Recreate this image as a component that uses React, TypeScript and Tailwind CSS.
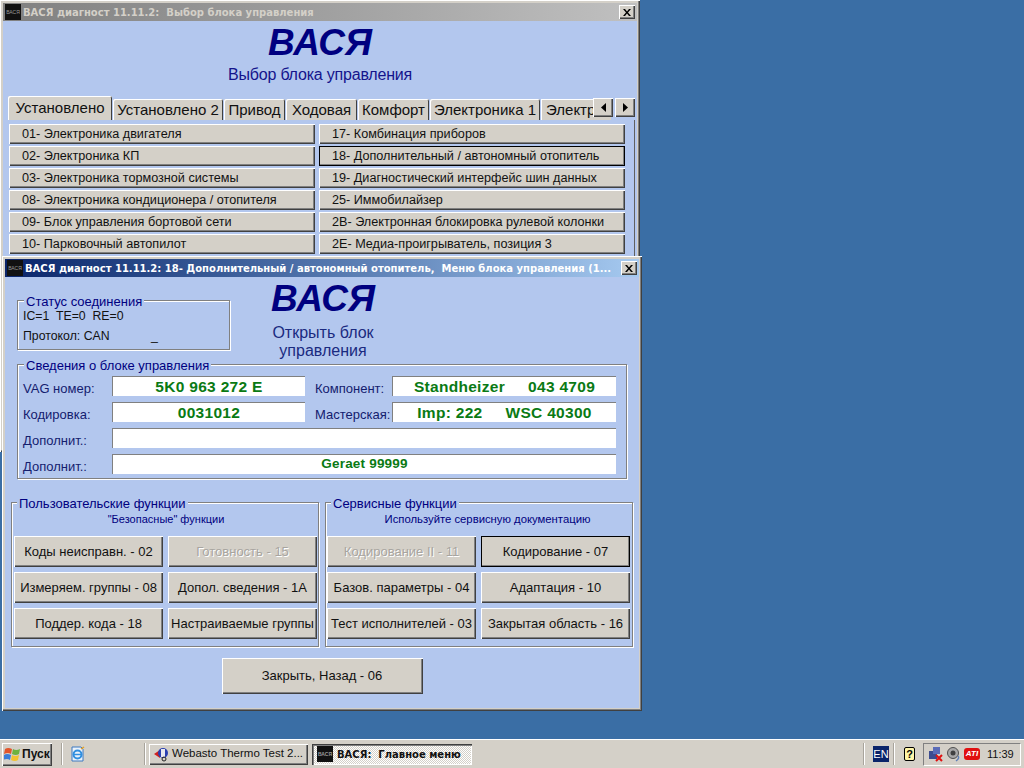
import type { ReactNode } from "react";

const bevel = "bg-[#D4D0C8] shadow-[inset_1px_1px_0_#fff,inset_-1px_-1px_0_#404040,inset_-2px_-2px_0_#808080]";
const etched = "border border-[#808080] shadow-[inset_1px_1px_0_#fff,1px_1px_0_#fff]";

const modulesLeft = [
  "01- Электроника двигателя",
  "02- Электроника КП",
  "03- Электроника тормозной системы",
  "08- Электроника кондиционера / отопителя",
  "09- Блок управления бортовой сети",
  "10- Парковочный автопилот",
];
const modulesRight = [
  "17- Комбинация приборов",
  "18- Дополнительный / автономный отопитель",
  "19- Диагностический интерфейс шин данных",
  "25- Иммобилайзер",
  "2B- Электронная блокировка рулевой колонки",
  "2E- Медиа-проигрыватель, позиция 3",
];

const tabs = [
  { label: "Установлено 2", w: "w-[110px]" },
  { label: "Привод", w: "w-[61px]" },
  { label: "Ходовая", w: "w-[71px]" },
  { label: "Комфорт", w: "w-[71px]" },
  { label: "Электроника 1", w: "w-[110px]" },
];

function AppLogo({ size = "w-[16px] h-[16px]" }: { size?: string }) {
  return (
    <div className={`${size} shrink-0 bg-[#111] flex items-center justify-center overflow-hidden text-[5px] leading-none text-[#999]`}>
      ВАСЯ
    </div>
  );
}

function CloseBox() {
  return (
    <div className={`${bevel} w-[16px] h-[14px] flex items-center justify-center`}>
      <svg width="8" height="7" viewBox="0 0 8 7">
        <path d="M0 0 L2 0 L4 2.5 L6 0 L8 0 L5 3.5 L8 7 L6 7 L4 4.5 L2 7 L0 7 L3 3.5 Z" fill="#000" />
      </svg>
    </div>
  );
}

function TitleBar({ text, active }: { text: string; active?: boolean }) {
  return (
    <div
      className={`h-[18px] shrink-0 flex items-center pl-[2px] pr-[2px] ${
        active ? "bg-gradient-to-r from-[#0A246A] to-[#A6CAF0] text-white" : "bg-gradient-to-r from-[#808080] to-[#C0C0C0] text-[#D4D0C8]"
      }`}
    >
      <AppLogo />
      <span className="ml-[2px] pt-[1px] flex-1 whitespace-pre font-['DejaVu_Sans',sans-serif] text-[10px] font-bold leading-none">{text}</span>
      <CloseBox />
    </div>
  );
}

function ModuleButton({ text, focused }: { text: string; focused?: boolean }) {
  return (
    <div
      className={`${bevel} h-[20px] flex items-center pl-[13px] text-[12.65px] text-[#111] ${focused ? "outline outline-1 -outline-offset-1 outline-black" : ""}`}
    >
      {text}
    </div>
  );
}

function FuncButton({ text, disabled, focused }: { text: string; disabled?: boolean; focused?: boolean }) {
  return (
    <div
      className={`${bevel} h-[31px] flex items-center justify-center text-[13px] whitespace-nowrap ${
        disabled ? "text-[#A8A5A0] [text-shadow:1px_1px_0_#fff]" : "text-[#111]"
      } ${focused ? "outline outline-1 -outline-offset-1 outline-black" : ""}`}
    >
      {text}
    </div>
  );
}

function Group({ legend, legendLeft = "left-[6px]", className, children }: { legend: string; legendLeft?: string; className: string; children: ReactNode }) {
  return (
    <div className={`relative ${etched} ${className}`}>
      <div className={`absolute -top-[6px] ${legendLeft} bg-[#B3C7EE] px-[2px] text-[13px] leading-[14px] text-[#000080]`}>{legend}</div>
      {children}
    </div>
  );
}

function Field({ text, small, className = "" }: { text?: string; small?: boolean; className?: string }) {
  return (
    <div
      className={`h-[20px] bg-white border-t border-l border-[#808080] flex items-center justify-center whitespace-pre font-bold text-[#0A7A14] ${
        small ? "text-[13.5px] tracking-[0.2px]" : "text-[15.5px] tracking-[0.3px]"
      } ${className}`}
    >
      {text}
    </div>
  );
}

function FieldLabel({ text }: { text: string }) {
  return <div className="h-[20px] pt-[4px] text-[13px] leading-[18px] text-[#14206E] whitespace-nowrap">{text}</div>;
}

function SelectWindow() {
  return (
    <div className="absolute left-0 top-0 w-[640px] h-[452px] p-[3px] flex flex-col bg-[#D4D0C8] shadow-[inset_1px_1px_0_#fff,inset_-1px_-1px_0_#404040,inset_-2px_-2px_0_#808080]">
      <TitleBar text="ВАСЯ диагност 11.11.2:  Выбор блока управления" />
      <div className="flex-1 bg-[#B3C7EE] flex flex-col">
        <div className="pt-[2px] text-center text-[37px] leading-[40px] font-bold italic text-[#000080]">ВАСЯ</div>
        <div className="mt-[3px] text-center text-[16px] tracking-[-0.2px] leading-[18px] text-[#14148C]">Выбор блока управления</div>
        <div className="relative mt-[12px] ml-[5px] w-[627px] h-[24px] flex items-end overflow-hidden text-[15px] text-[#111]">
          <div className="w-[104px] h-[24px] shrink-0 bg-[#D4D0C8] rounded-t-[2px] shadow-[inset_1px_1px_0_#fff,inset_-1px_0_0_#404040] flex items-center justify-center">
            Установлено
          </div>
          {tabs.map((t) => (
            <div
              key={t.label}
              className={`${t.w} h-[21px] shrink-0 ml-[1px] pt-[1px] bg-[#D4D0C8] rounded-t-[2px] shadow-[inset_1px_1px_0_#fff,inset_-1px_0_0_#404040] flex items-center justify-center whitespace-nowrap`}
            >
              {t.label}
            </div>
          ))}
          <div className="w-[70px] h-[21px] shrink-0 ml-[1px] pt-[1px] bg-[#D4D0C8] shadow-[inset_1px_1px_0_#fff] flex items-center pl-[5px] overflow-hidden whitespace-nowrap">
            Электр
          </div>
          <div className="absolute right-[22px] top-[2px] w-[20px] h-[19px] flex items-center justify-center bg-[#D4D0C8] shadow-[inset_1px_1px_0_#fff,inset_-1px_-1px_0_#404040,inset_-2px_-2px_0_#808080]">
            <svg width="5" height="9" viewBox="0 0 5 9"><path d="M5 0 L5 9 L0 4.5 Z" fill="#000" /></svg>
          </div>
          <div className="absolute right-0 top-[2px] w-[20px] h-[19px] flex items-center justify-center bg-[#D4D0C8] shadow-[inset_1px_1px_0_#fff,inset_-1px_-1px_0_#404040,inset_-2px_-2px_0_#808080]">
            <svg width="5" height="9" viewBox="0 0 5 9"><path d="M0 0 L0 9 L5 4.5 Z" fill="#000" /></svg>
          </div>
        </div>
        <div className="ml-[6px] w-[626px] flex-1 border-r border-[#606060] pt-[4px] pl-0">
          <div className="grid grid-cols-[306px_306px] gap-x-[4px] gap-y-[2px]">
            {modulesLeft.map((m, i) => (
              <div key={m} className="contents">
                <ModuleButton text={m} />
                <ModuleButton text={modulesRight[i]} focused={i === 1} />
              </div>
            ))}
          </div>
        </div>
      </div>
    </div>
  );
}

function BlockWindow() {
  return (
    <div className="absolute left-[2px] top-[256px] w-[640px] h-[455px] p-[3px] flex flex-col bg-[#D4D0C8] shadow-[inset_1px_1px_0_#fff,inset_-1px_-1px_0_#404040,inset_-2px_-2px_0_#808080]">
      <TitleBar active text="ВАСЯ диагност 11.11.2: 18- Дополнительный / автономный отопитель,  Меню блока управления (1..." />
      <div className="flex-1 bg-[#B3C7EE] flex flex-col">
        <div className="h-[87px] flex items-start">
          <Group legend="Статус соединения" className="ml-[12px] mt-[23px] w-[213px] h-[50px] pl-[5px] pt-[8px] text-[12.3px] leading-[14px] text-[#111]">
            <div className="whitespace-pre">IC=1  TE=0  RE=0</div>
            <div className="mt-[6px] flex whitespace-pre">
              <span className="w-[128px]">Протокол: CAN</span>
              <span>_</span>
            </div>
          </Group>
          <div className="w-[186px] pt-[2px] text-center">
            <div className="text-[37px] leading-[40px] font-bold italic text-[#000080]">ВАСЯ</div>
            <div className="mt-[5px] text-[16px] leading-[18px] text-[#1A2A80]">
              Открыть блок
              <br />
              управления
            </div>
          </div>
        </div>

        <Group legend="Сведения о блоке управления" className="ml-[12px] w-[610px] h-[115px] pl-[5px] pt-[11px]">
          <div className="grid grid-cols-[89px_193px_87px_224px] gap-y-[6px]">
            <FieldLabel text="VAG номер:" />
            <Field text="5K0 963 272 E" />
            <div className="pl-[10px]"><FieldLabel text="Компонент:" /></div>
            <Field text={"Standheizer     043 4709"} />
            <FieldLabel text="Кодировка:" />
            <Field text="0031012" />
            <div className="pl-[10px]"><FieldLabel text="Мастерская:" /></div>
            <Field text={"Imp: 222     WSC 40300"} />
            <FieldLabel text="Дополнит.:" />
            <Field className="col-span-3" />
            <FieldLabel text="Дополнит.:" />
            <Field small className="col-span-3" text="Geraet 99999" />
          </div>
        </Group>

        <div className="mt-[23px] ml-[6px] flex gap-[6px]">
          <Group legend="Пользовательские функции" legendLeft="left-[5px]" className="w-[308px] h-[145px] pl-[2px]">
            <div className="pt-[9px] h-[33px] text-center text-[11px] leading-[14px] text-[#000080]">"Безопасные" функции</div>
            <div className="grid grid-cols-[149px_149px] gap-x-[5px] gap-y-[5px]">
              <FuncButton text="Коды неисправн. - 02" />
              <FuncButton text="Готовность - 15" disabled />
              <FuncButton text="Измеряем. группы - 08" />
              <FuncButton text="Допол. сведения - 1A" />
              <FuncButton text="Поддер. кода - 18" />
              <FuncButton text="Настраиваемые группы" />
            </div>
          </Group>
          <Group legend="Сервисные функции" legendLeft="left-[5px]" className="w-[308px] h-[145px] pl-[1px]">
            <div className="pt-[9px] pl-[16px] h-[33px] text-center text-[11.3px] leading-[14px] text-[#000080]">Используйте сервисную документацию</div>
            <div className="grid grid-cols-[149px_149px] gap-x-[5px] gap-y-[5px]">
              <FuncButton text="Кодирование II - 11" disabled />
              <FuncButton text="Кодирование - 07" focused />
              <FuncButton text="Базов. параметры - 04" />
              <FuncButton text="Адаптация - 10" />
              <FuncButton text="Тест исполнителей - 03" />
              <FuncButton text="Закрытая область - 16" />
            </div>
          </Group>
        </div>

        <div className="mt-[11px] flex justify-center">
          <div className={`${bevel} w-[201px] h-[36px] flex items-center justify-center text-[13px] text-[#111]`}>Закрыть, Назад - 06</div>
        </div>
      </div>
    </div>
  );
}

function StartFlag() {
  return (
    <svg width="17" height="15" viewBox="0 0 17 15">
      <path d="M1 2 Q4 0 8 2 L7 7 Q4 5 0 7 Z" fill="#E2552B" />
      <path d="M9 2 Q12 4 16 2 L15 7 Q12 9 8 7 Z" fill="#6DB23F" />
      <path d="M0 8 Q3 6 7 8 L6 13 Q3 11 -1 13 Z" fill="#3B7DD8" />
      <path d="M8 8 Q11 10 15 8 L14 13 Q11 15 7 13 Z" fill="#F2C230" />
    </svg>
  );
}

function Separator({ className }: { className: string }) {
  return <div className={`w-[2px] h-[22px] shrink-0 bg-white border-l border-[#A8A49C] ${className}`} />;
}

function Taskbar() {
  return (
    <div className="h-[29px] shrink-0 border-t border-white bg-[#D4D0C8] flex items-center pl-[2px] text-[12px] text-[#111]">
      <div className="w-[50px] h-[23px] shrink-0 flex items-center pl-[2px] gap-[1px] font-bold shadow-[inset_1px_1px_0_#fff,inset_-1px_-1px_0_#404040,inset_-2px_-2px_0_#808080]">
        <StartFlag />
        <span className="text-[12px]">Пуск</span>
      </div>
      <Separator className="ml-[9px]" />
      <div className="ml-[6px] w-[16px] h-[16px] shrink-0">
        <svg width="16" height="16" viewBox="0 0 16 16">
          <path d="M3 1 H12 L14 3 V15 H3 Z" fill="#EAF2FB" stroke="#3C78C0" />
          <circle cx="8.5" cy="8.5" r="4" fill="none" stroke="#2F8FE0" strokeWidth="2" />
          <path d="M5 8.5 H12" stroke="#2F8FE0" strokeWidth="1.5" />
          <path d="M12 3 L15 1" stroke="#E8A020" strokeWidth="1.5" />
        </svg>
      </div>
      <Separator className="ml-[59px]" />
      <div className={`${bevel} ml-[3px] w-[159px] h-[21px] shrink-0 flex items-center pl-[4px] gap-[3px]`}>
        <svg width="16" height="16" viewBox="0 0 16 16">
          <path d="M1 8 L7 4 V12 Z" fill="#D02020" />
          <circle cx="10" cy="7" r="5" fill="#2A3FB0" />
          <path d="M8 3 H12 V11 H8 Z" fill="#E8E8F0" />
          <circle cx="11" cy="13" r="2" fill="none" stroke="#222" />
        </svg>
        <span className="whitespace-nowrap text-[11.5px]">Webasto Thermo Test 2...</span>
      </div>
      <div className="ml-[4px] w-[160px] h-[21px] shrink-0 flex items-center pl-[5px] gap-[4px] font-bold shadow-[inset_1px_1px_0_#404040,inset_2px_2px_0_#808080,inset_-1px_-1px_0_#fff] bg-[repeating-conic-gradient(#fff_0_25%,#D4D0C8_0_50%)] bg-[length:2px_2px]">
        <AppLogo />
        <span className="font-['DejaVu_Sans',sans-serif] text-[10px] whitespace-pre">ВАСЯ:  Главное меню</span>
      </div>
      <Separator className="ml-[391px]" />
      <div className="ml-[8px] w-[16px] h-[16px] shrink-0 bg-[#0A246A] text-white text-[11px] leading-[16px] text-center">EN</div>
      <Separator className="ml-[4px]" />
      <div className="ml-[9px] w-[11px] h-[14px] shrink-0 bg-[#FFF6A8] border border-black rounded-[2px] text-[11px] leading-[12px] font-bold text-center text-black">?</div>
      <div className="ml-[8px] w-[98px] h-[23px] shrink-0 flex items-center pl-[3px] border border-t-[#808080] border-l-[#808080] border-r-white border-b-white">
        <svg width="18" height="17" viewBox="0 0 18 17">
          <rect x="2" y="5" width="8" height="8" fill="#3C4C90" />
          <rect x="6" y="1" width="7" height="7" fill="#5A6CB8" />
          <path d="M9 9 L15 15 M15 9 L9 15" stroke="#E01010" strokeWidth="2" />
        </svg>
        <svg className="ml-[1px]" width="16" height="16" viewBox="0 0 16 16">
          <circle cx="7" cy="7" r="5.5" fill="#A8A8A8" stroke="#505050" />
          <circle cx="7" cy="7" r="2.5" fill="#404040" />
          <path d="M12 10 Q14 12 10 15" stroke="#6080B8" fill="none" strokeWidth="1.5" />
        </svg>
        <div className="ml-[2px] w-[16px] h-[12px] rounded-[3px] bg-[#E01010] text-white text-[8px] leading-[12px] font-bold italic text-center">ATI</div>
        <span className="ml-[7px] text-[11px]">11:39</span>
      </div>
    </div>
  );
}

export default function App() {
  return (
    <div className="w-[1024px] h-[768px] overflow-hidden flex flex-col bg-[#3A6EA5] font-['Liberation_Sans',Arial,sans-serif]">
      <div className="relative flex-1">
        <SelectWindow />
        <BlockWindow />
      </div>
      <Taskbar />
    </div>
  );
}
